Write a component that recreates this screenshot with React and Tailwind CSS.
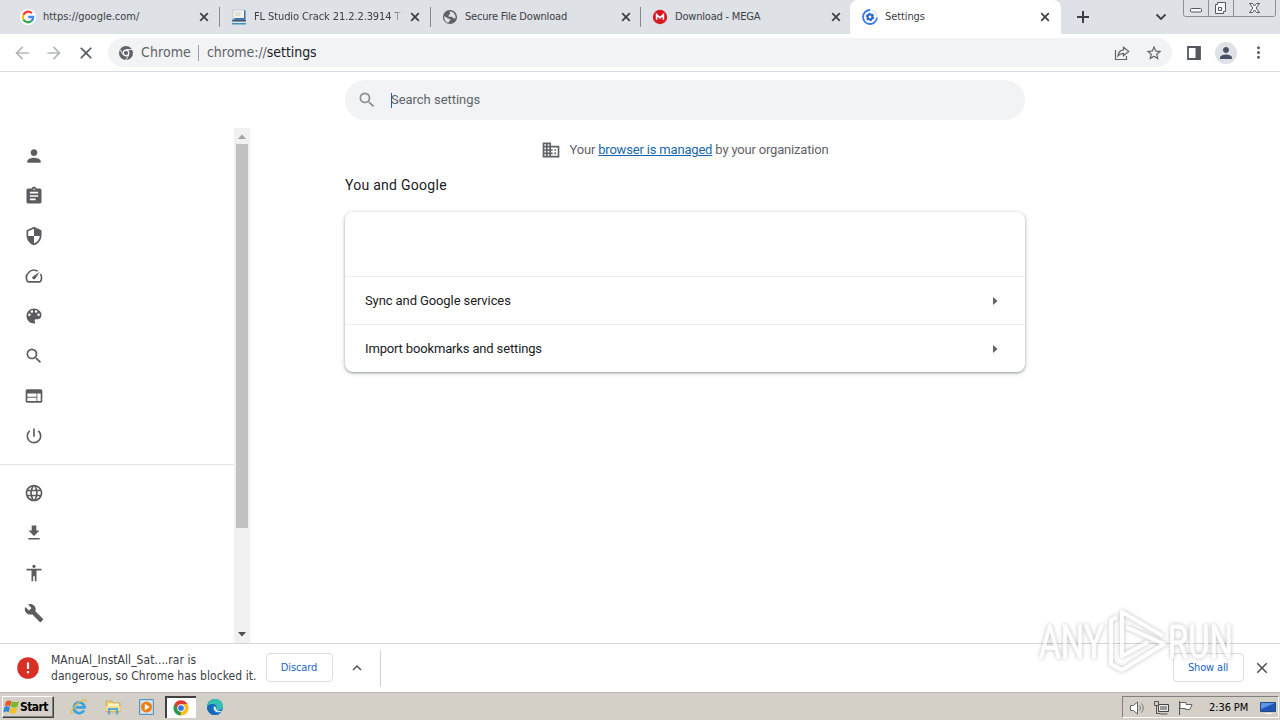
import {
  MdAccessibility,
  MdAssignment,
  MdBuild,
  MdClose,
  MdDomain,
  MdExpandLess,
  MdLanguage,
  MdMoreVert,
  MdPerson,
  MdPowerSettingsNew,
  MdSearch,
  MdSecurity,
  MdSpeed,
  MdStarOutline,
  MdWeb,
  MdArrowBack,
  MdArrowForward,
} from 'react-icons/md';

function GoogleIcon() {
  return (
    <svg width="16" height="16" viewBox="0 0 16 16">
      <circle cx="8" cy="8" r="8" fill="#fff" />
      <g fill="none" strokeWidth="2.3">
        <path d="M11.9 4.3A5.2 5.2 0 0 0 3.4 5.7" stroke="#ea4335" />
        <path d="M3.4 5.7a5.2 5.2 0 0 0 0 4.8" stroke="#fbbc05" />
        <path d="M3.4 10.5a5.2 5.2 0 0 0 8.1 1.4" stroke="#34a853" />
        <path d="M11.5 11.9A5 5 0 0 0 13.1 8H8.2" stroke="#4285f4" />
      </g>
    </svg>
  );
}

function LaptopIcon() {
  return (
    <svg width="16" height="16" viewBox="0 0 16 16">
      <path d="M2 1h11.5v9H2z" fill="#f4f3ea" stroke="#b9c9cc" />
      <path d="M4 3.500h6v1H4zM4 5.500h5v1H4z" fill="#c2ccc6" />
      <path d="M13 1.500h1.500v9H3.500V9H13z" fill="#3c6fa8" />
      <path d="M1.500 10.500h13l.5 2H1z" fill="#2c5778" />
      <path d="M1 14h14v1.500H1z" fill="#4d93b5" />
    </svg>
  );
}

function GlobeIcon() {
  return (
    <svg width="16" height="16" viewBox="0 0 16 16">
      <circle cx="8" cy="8" r="7.1" fill="#5f6368" />
      <path d="M2.600 7.200 6 9.600l2.200.4v1.300L6.600 13v1C4 13.400 2.100 11 2.100 8zM8.500 2.200l-1 1.900 1 1-1.800 1v1.600h3.200l1.500 1.600h2.200c.4-3-1.800-6.400-5.100-7.100z" fill="#dee1e6" />
    </svg>
  );
}

function MegaIcon() {
  return (
    <svg width="16" height="16" viewBox="0 0 16 16">
      <circle cx="8" cy="8" r="7.2" fill="#d9171f" />
      <path d="M4.6 10.8V5.6L8 8.800l3.400-3.200v5.200" fill="none" stroke="#fff" strokeWidth="1.6" />
    </svg>
  );
}

function SettingsIcon() {
  return (
    <svg width="16" height="16" viewBox="0 0 16 16">
      <path d="M8 1A7 7 0 1 0 15 8.500" fill="none" stroke="#3b7de0" strokeWidth="1.8" />
      <path d="M8 1a7 7 0 0 1 7 7.500" fill="none" stroke="#d3e1f8" strokeWidth="1.2" />
      <circle cx="8" cy="8" r="2.4" fill="none" stroke="#2b66c4" strokeWidth="2" />
      <circle cx="8" cy="8" r="3.7" fill="none" stroke="#2b66c4" strokeWidth="1.2" strokeDasharray="1.94 1.94" />
    </svg>
  );
}

function ChromeGrey() {
  return (
    <svg width="16" height="16" viewBox="0 0 16 16">
      <circle cx="8" cy="8" r="7" fill="#5f6368" />
      <circle cx="8" cy="8" r="3.4" fill="#f1f3f4" />
      <path d="M8 4.6h6.3M5.1 9.8 2 4.3M10.9 9.8 7.8 15" stroke="#f1f3f4" strokeWidth="1" />
      <circle cx="8" cy="8" r="2.1" fill="#5f6368" />
    </svg>
  );
}

function ChromeIcon() {
  return (
    <svg width="16" height="16" viewBox="0 0 18 18">
      <path d="M9 9 1.6 4.8A8.4 8.4 0 0 0 8.6 17.4L11 13z" fill="#2d9b4a" />
      <path d="M9 9 8.6 17.4A8.4 8.4 0 0 0 16.4 4.8H9z" fill="#fbc116" />
      <path d="M9 4.8h7.4A8.4 8.4 0 0 0 1.6 4.8L5.2 10z" fill="#e33b2e" />
      <circle cx="9" cy="9" r="4.2" fill="#fff" />
      <circle cx="9" cy="9" r="3.2" fill="#3574e2" />
    </svg>
  );
}

function ExplorerIcon() {
  return (
    <svg width="18" height="18" viewBox="0 0 18 18">
      <path d="M14 12.3a5.400 5.400 0 1 1 .6-3H6" fill="none" stroke="#3ba3df" strokeWidth="2.8" />
      <path d="M2.500 16c-3-2 2-9 7-12 4-2.500 7.500-3 7-.3" fill="none" stroke="#e8b93c" strokeWidth="1.400" />
    </svg>
  );
}

function FolderIcon() {
  return (
    <svg width="18" height="18" viewBox="0 0 18 18">
      <path d="M2 3h6l1 2h7v9H2z" fill="#e9cd73" stroke="#bf9c43" strokeWidth=".7" />
      <path d="M4 5.5h11v4H4z" fill="#fff5bf" />
      <path d="M1.500 8h15v5h-15z" fill="#f3de91" />
      <path d="M5 16.500V11h8v5.500" fill="none" stroke="#5fa9d7" strokeWidth="2.200" />
    </svg>
  );
}

function MediaIcon() {
  return (
    <svg width="18" height="18" viewBox="0 0 18 18">
      <path d="M1.500 1.500h14v15h-14z" fill="#b8d4ec" stroke="#5e94c0" />
      <path d="M3.500 3h10v12h-10z" fill="#e0ecf6" />
      <circle cx="8.500" cy="9" r="5.500" fill="#ee7f14" />
      <path d="m6.800 5.800 5 3.200-5 3.200z" fill="#fff" />
    </svg>
  );
}

function EdgeIcon() {
  return (
    <svg width="18" height="18" viewBox="0 0 18 18">
      <circle cx="9" cy="9" r="8" fill="#1673c4" />
      <path d="M1 9C1.500 4 5 1 9 1c5 0 8 3.500 8 7 0 3-2.500 4-5 4-1.500 0-2-.7-1.500-1.500C11.500 8 9.500 6 7 6 4 6 2 7.500 1 9z" fill="#35c1b1" />
      <path d="M1 9c1-2 3-3 6-3C5 7.500 5 12 8 14.500s5.500 1.500 7 .2C13.500 16 11.500 17 9 17 4.500 17 1 13.500 1 9z" fill="#1768b4" />
      <path d="M8.500 8c-1.500 1.500-1 5 2 6s5-.5 5.800-1.300c-1.500.6-4 .6-5.300-.6-1.500-1.100 0-2-2.500-4.100z" fill="#d6ecf2" />
    </svg>
  );
}

function WindowsFlag() {
  return (
    <svg className="shrink-0" width="17" height="16" viewBox="0 0 17 16">
      <path d="M3 2.500C5 1 6.500 1.200 8.500 2.300L7.200 7.500C5.500 6.300 4 6.200 1.700 7.500z" fill="#e8562a" />
      <path d="M9 2.500c2 1 4 1.200 6.900-.4l-1.400 5.500C12.400 9 10 8.900 7.800 7.800z" fill="#79b72c" />
      <path d="M1.500 8c2.200-1.200 3.800-1 5.500.1l-1.300 5.200C4 12.300 2.400 12.200.2 13.500z" fill="#3288d8" />
      <path d="M7.600 8.400c2 1 4 1.200 6.700-.2L13 13.700c-2.400 1.300-4.500 1.100-6.700.1z" fill="#f5bf28" />
    </svg>
  );
}

function TabClose() {
  return (
    <svg className="ml-2 shrink-0" width="10" height="10" viewBox="0 0 10 10">
      <path d="m1.200 1.200 7.600 7.600M8.800 1.200 1.200 8.800" stroke="#3c4043" strokeWidth="1.700" />
    </svg>
  );
}

const TABS = [
  { title: 'https://google.com/', icon: GoogleIcon, tracking: 'tracking-[-0.02px]', box: 'w-[220px] pl-5' },
  { title: 'FL Studio Crack 21.2.2.3914 T', icon: LaptopIcon, tracking: 'tracking-[-0.1px]', box: 'w-[211px] pl-[11px]', fade: true },
  { title: 'Secure File Download', icon: GlobeIcon, tracking: 'tracking-[-0.2px]', box: 'w-[210px] pl-[11px]' },
  { title: 'Download - MEGA', icon: MegaIcon, tracking: 'tracking-[-0.2px]', box: 'w-[209px] pl-[11px]' },
];

function TabStrip() {
  return (
    <div className="flex h-[34px] bg-[#dee1e6] text-[11px] text-[#3c4043]">
      {TABS.map(({ title, icon: Icon, tracking, box, fade }, i) => (
        <div key={title} className={`flex h-[34px] items-center ${box}`}>
          <Icon />
          <span
            className={`ml-[7px] w-[148px] whitespace-nowrap ${tracking} ${
              fade ? '[mask-image:linear-gradient(to_right,#000_136px,transparent_150px)]' : ''
            }`}
          >
            {title}
          </span>
          <TabClose />
          {i < 3 && <span className="ml-auto h-5 w-px bg-[#868a90]" />}
        </div>
      ))}
      <div className="flex w-[211px] items-center rounded-t-lg bg-white pl-3">
        <SettingsIcon />
        <span className="ml-[7px] w-[147px] tracking-[-0.1px]">Settings</span>
        <TabClose />
      </div>
      <div className="flex flex-1 items-start">
        <svg className="mt-[10px] ml-[15px]" width="14" height="14" viewBox="0 0 14 14">
          <path d="M7 1v12M1 7h12" stroke="#3c4043" strokeWidth="2" />
        </svg>
        <svg className="mt-[13px] ml-[65px]" width="12" height="8" viewBox="0 0 12 8">
          <path d="m1.500 1.500 4.500 4.500 4.500-4.500" fill="none" stroke="#3c4043" strokeWidth="1.800" />
        </svg>
        <svg className="ml-4" width="93" height="17" viewBox="0 0 93 17">
          <path d="M.5 0v14.500q0 2 2 2h88q2 0 2-2V0M25.500 0v16M50.500 0v16" fill="none" stroke="#8b8e93" />
          <g fill="#f6f7f8" stroke="#54585e">
            <rect x="7.500" y="8.500" width="11" height="3.500" rx="1" />
            <path d="M34.500 2.500h8v9h-2v2h-8v-9h2z" />
            <path d="M35.500 7.500h3v3h-3z" />
            <path d="M66.500 3.500h3l2 2.500 2-2.500h3l-3.400 4.500 3.400 4.500h-3l-2-2.500-2 2.500h-3l3.400-4.500z" />
          </g>
        </svg>
      </div>
    </div>
  );
}

function Toolbar() {
  return (
    <div className="flex h-[38px] items-center border-b border-[#d9dbde] bg-white pl-3 text-[#5f6368]">
      <MdArrowBack size={20} className="text-[#b5b7ba]" />
      <MdArrowForward size={20} className="ml-3 text-[#b5b7ba]" />
      <MdClose size={20} className="ml-3 text-[#55585c]" />
      <div className="ml-[12px] flex h-[29px] w-[1064px] items-center rounded-full bg-[#f1f3f4] pl-[10px] text-[14px]">
        <ChromeGrey />
        <span className="ml-[7px] w-[50px] whitespace-nowrap tracking-[0.1px]">Chrome</span>
        <span className="ml-[7px] h-4 w-px bg-[#9aa0a6]" />
        <span className="ml-[8px] whitespace-nowrap tracking-[-0.05px]">
          chrome://<span className="text-[#202124]">settings</span>
        </span>
        <svg className="ml-auto" width="16" height="16" viewBox="0 0 16 16">
          <path d="M1.500 5v9.500h11V11" fill="none" stroke="#5f6368" strokeWidth="1.200" />
          <path d="M9.500 2.200 14.700 6.500 9.500 10.800V8.300C7 8.300 5.500 9 4 11c.3-3.500 2.300-5.700 5.500-6.200z" fill="none" stroke="#5f6368" strokeWidth="1.200" />
        </svg>
        <MdStarOutline size={18} className="mr-[9px] ml-[15px]" />
      </div>
      <svg className="ml-[14px]" width="16" height="16" viewBox="0 0 16 16">
        <path d="M2 2h12v12H2z" fill="none" stroke="#55585c" strokeWidth="1.800" />
        <path d="M9.500 2H14v12H9.500z" fill="#55585c" />
      </svg>
      <div className="ml-[13px] flex h-[22px] w-[22px] items-center justify-center rounded-full bg-[#dee1e6]">
        <MdPerson size={18} className="text-[#4a5168]" />
      </div>
      <MdMoreVert size={19} className="ml-[12px]" />
    </div>
  );
}

function DownloadGlyph() {
  return (
    <svg width="20" height="20" viewBox="0 0 20 20" fill="currentColor">
      <path d="M7.700 2.500h4.600v5h3.200L10 13 4.500 7.500h3.200zM4.300 15h11.400v1.600H4.300z" />
    </svg>
  );
}

function PaletteGlyph() {
  return (
    <svg width="20" height="20" viewBox="0 0 24 24" fill="currentColor">
      <path d="M12 3c-4.970 0-9 4.030-9 9s4.030 9 9 9c.83 0 1.500-.67 1.500-1.500 0-.39-.15-.74-.39-1.010-.23-.26-.38-.61-.38-.99 0-.83.67-1.500 1.500-1.500H16c2.760 0 5-2.240 5-5 0-4.420-4.030-8-9-8zm-5.500 9c-.83 0-1.500-.67-1.500-1.500S5.670 9 6.500 9 8 9.670 8 10.500 7.330 12 6.500 12zm3-4C8.670 8 8 7.330 8 6.500S8.670 5 9.500 5s1.500.67 1.500 1.500S10.330 8 9.500 8zm5 0c-.83 0-1.500-.67-1.500-1.500S13.670 5 14.500 5s1.500.67 1.500 1.500S15.330 8 14.500 8zm3 4c-.83 0-1.500-.67-1.500-1.500S16.670 9 17.500 9s1.500.67 1.500 1.500-.67 1.500-1.500 1.500z" />
    </svg>
  );
}

const MENU_TOP = [MdPerson, MdAssignment, MdSecurity, MdSpeed, PaletteGlyph, MdSearch, MdWeb, MdPowerSettingsNew];
const MENU_BOTTOM = [MdLanguage, DownloadGlyph, MdAccessibility, MdBuild];

function MenuItem({ icon: Icon }) {
  return (
    <div className="flex h-10 items-center pl-6 text-[#5a5c60]">
      <Icon size={20} />
    </div>
  );
}

function Sidebar() {
  return (
    <div className="mt-14 flex h-[515px] w-[250px] overflow-hidden">
      <div className="w-[234px] pt-2">
        {MENU_TOP.map((icon, i) => (
          <MenuItem key={i} icon={icon} />
        ))}
        <div className="my-2 h-px bg-[#e4e5e7]" />
        {MENU_BOTTOM.map((icon, i) => (
          <MenuItem key={i} icon={icon} />
        ))}
      </div>
      <div className="flex w-4 flex-col items-center bg-[#f1f1f1]">
        <svg width="16" height="16" viewBox="0 0 16 16">
          <path d="m4 11 4-4.500 4 4.500z" fill="#a3a3a3" />
        </svg>
        <div className="h-[384px] w-3 bg-[#c1c1c1]" />
        <svg className="mt-auto" width="16" height="16" viewBox="0 0 16 16">
          <path d="m4 5 4 4.500L12 5z" fill="#505050" />
        </svg>
      </div>
    </div>
  );
}

function CardRow({ label, tracking }) {
  return (
    <div className="flex h-12 items-center justify-between border-t border-[#ececee] pr-[26px] pl-5">
      <span className={tracking}>{label}</span>
      <svg width="8" height="8" viewBox="0 0 8 8">
        <path d="M2 0v8l4.500-4z" fill="#5f6368" />
      </svg>
    </div>
  );
}

function SettingsPage() {
  return (
    <div className="ml-[95px] w-[680px] pt-2 font-[Roboto,sans-serif] text-[13px] text-[#202124]">
      <div className="flex h-10 items-center rounded-full bg-[#f1f3f4] pl-3 text-[#5f6368]">
        <MdSearch size={20} className="text-[#8a8d91]" />
        <span className="ml-[14px] h-[15px] w-px bg-[#2a56c6]" />
        <span className="-ml-px tracking-[-0.03px]">Search settings</span>
      </div>
      <div className="mt-5 flex h-5 items-center justify-center text-[#5f6368]">
        <MdDomain size={20} />
        <span className="ml-2 whitespace-nowrap tracking-[-0.18px]">
          Your <a className="text-[#1967a8] underline">browser is managed</a> by your organization
        </span>
      </div>
      <h2 className="mt-[14px] h-[22px] text-[14px] leading-[22px] tracking-[0.27px]">You and Google</h2>
      <div className="mt-4 h-[160px] rounded-lg bg-white pt-16 shadow-[0_1px_2px_rgba(60,64,67,0.4),0_1px_4px_1px_rgba(60,64,67,0.18)]">
        <CardRow label="Sync and Google services" tracking="tracking-[-0.1px]" />
        <CardRow label="Import bookmarks and settings" tracking="tracking-[-0.15px]" />
      </div>
    </div>
  );
}

function DownloadBar() {
  return (
    <div className="flex h-[49px] items-center border-t border-[#d4d6d9] bg-white pl-[17px] text-[11px] text-[#1a66c2]">
      <svg width="22" height="22" viewBox="0 0 22 22">
        <circle cx="11" cy="11" r="10.800" fill="#d93025" />
        <path d="M9.900 5.500h2.200v6.600H9.900zM9.900 14h2.200v2.300H9.900z" fill="#fff" />
      </svg>
      <div className="ml-3 w-[207px] text-[12px] leading-4 tracking-[0.05px] whitespace-nowrap text-[#3c4043]">
        <p>MAnuAl_InstAll_Sat....rar is</p>
        <p>dangerous, so Chrome has blocked it.</p>
      </div>
      <button className="mb-px ml-2 h-[29px] w-[67px] rounded border border-[#dadce0] pt-px pr-px tracking-[-0.1px]">Discard</button>
      <MdExpandLess size={18} className="ml-[15px] text-[#4a4d51]" />
      <span className="ml-[14px] h-[37px] w-px bg-[#d0d2d5]" />
      <button className="mr-[9px] mb-px ml-auto h-[29px] w-[71px] rounded border border-[#dadce0] pt-px pr-px tracking-[-0.15px]">Show all</button>
      <MdClose size={18} className="mr-[9px] mb-px text-[#4a4d51]" />
    </div>
  );
}

function Tray() {
  return (
    <div className="mr-[1px] ml-auto flex h-[22px] w-[157px] items-center border border-[#808080] border-r-white border-b-white pt-px pl-[6px]">
      <svg width="17" height="16" viewBox="0 0 17 16">
        <path d="M1.500 5.500h3L8.500 2v12l-4-3.500h-3z" fill="#fff" stroke="#666" />
        <path d="M10.500 5.500q2 2.500 0 5M12.500 3.500q3.500 4.500 0 9" fill="none" stroke="#777" />
      </svg>
      <svg className="ml-[7px]" width="17" height="16" viewBox="0 0 17 16">
        <path d="M5.500 4.500h10v7h-10z" fill="#999" stroke="#444" />
        <path d="M6.500 5.500h8v5h-8z" fill="none" stroke="#eee" />
        <path d="M1.500 1.500h4v4h-4zM3.500 5.500v8h4M7.500 14h7" fill="none" stroke="#555" />
      </svg>
      <svg className="ml-[7px]" width="17" height="16" viewBox="0 0 17 16">
        <path d="M2.500 1v14" stroke="#555" />
        <path d="M3 2.500h6v2h6l-2 5H8.500v-1H3z" fill="#fff" stroke="#666" />
      </svg>
      <span className="ml-[15px] w-[41px] pt-px text-[11px] tracking-[-0.1px] whitespace-nowrap text-black">2:36 PM</span>
      <svg className="ml-[10px]" width="16" height="16" viewBox="0 0 16 16">
        <path d="M.5 2.500h15v9H.5z" fill="#2056b8" stroke="#254a80" />
        <path d="M1 3h14L1 9z" fill="#5b96e8" />
        <path d="M5 13h7v1H5z" fill="#f4f4f4" />
      </svg>
    </div>
  );
}

function Taskbar() {
  return (
    <div className="flex h-7 items-center border-t border-[#b6b4b0] bg-[#d4d0c8] pt-px pl-[2px]">
      <button className="flex h-[22px] w-[52px] items-center border border-white border-r-[#404040] border-b-[#404040] text-[12px] font-bold tracking-[-0.6px] text-black shadow-[inset_-1px_-1px_0_#808080]">
        <WindowsFlag />
        Start
      </button>
      <div className="ml-4 flex items-center">
        <ExplorerIcon />
        <span className="w-4" />
        <FolderIcon />
        <span className="w-4" />
        <MediaIcon />
      </div>
      <div className="ml-[9px] flex h-[22px] w-[31px] items-center justify-center border-t-2 border-l-2 border-[#404040] bg-white pr-[2px] pb-px">
        <ChromeIcon />
      </div>
      <span className="w-[10px]" />
      <EdgeIcon />
      <Tray />
    </div>
  );
}

function Watermark() {
  return (
    <svg
      className="absolute top-[600px] left-[1030px] opacity-75 drop-shadow-[0_0_2px_rgba(0,0,0,0.35)]"
      width="210"
      height="80"
      viewBox="0 0 210 80"
    >
      <g fontFamily="Roboto, sans-serif" fontSize="46" fill="#fff" stroke="#fff" strokeWidth="0.800">
        <text x="9" y="58" textLength="65" lengthAdjust="spacingAndGlyphs">ANY</text>
        <text x="138" y="58" textLength="65" lengthAdjust="spacingAndGlyphs">RUN</text>
      </g>
      <g fill="none" stroke="#fff" strokeWidth="4" strokeLinejoin="round">
        <path d="M133 36 92 12v44l26-14" />
        <path d="M87 17l-6 3v44l11 6 42-26-38-17" />
      </g>
    </svg>
  );
}

export default function App() {
  return (
    <div className="relative flex h-[720px] w-[1280px] flex-col overflow-hidden bg-white font-['DejaVu_Sans_Condensed','DejaVu_Sans',sans-serif]">
      <TabStrip />
      <Toolbar />
      <div className="flex h-[571px]">
        <Sidebar />
        <SettingsPage />
      </div>
      <DownloadBar />
      <Taskbar />
      <Watermark />
    </div>
  );
}
